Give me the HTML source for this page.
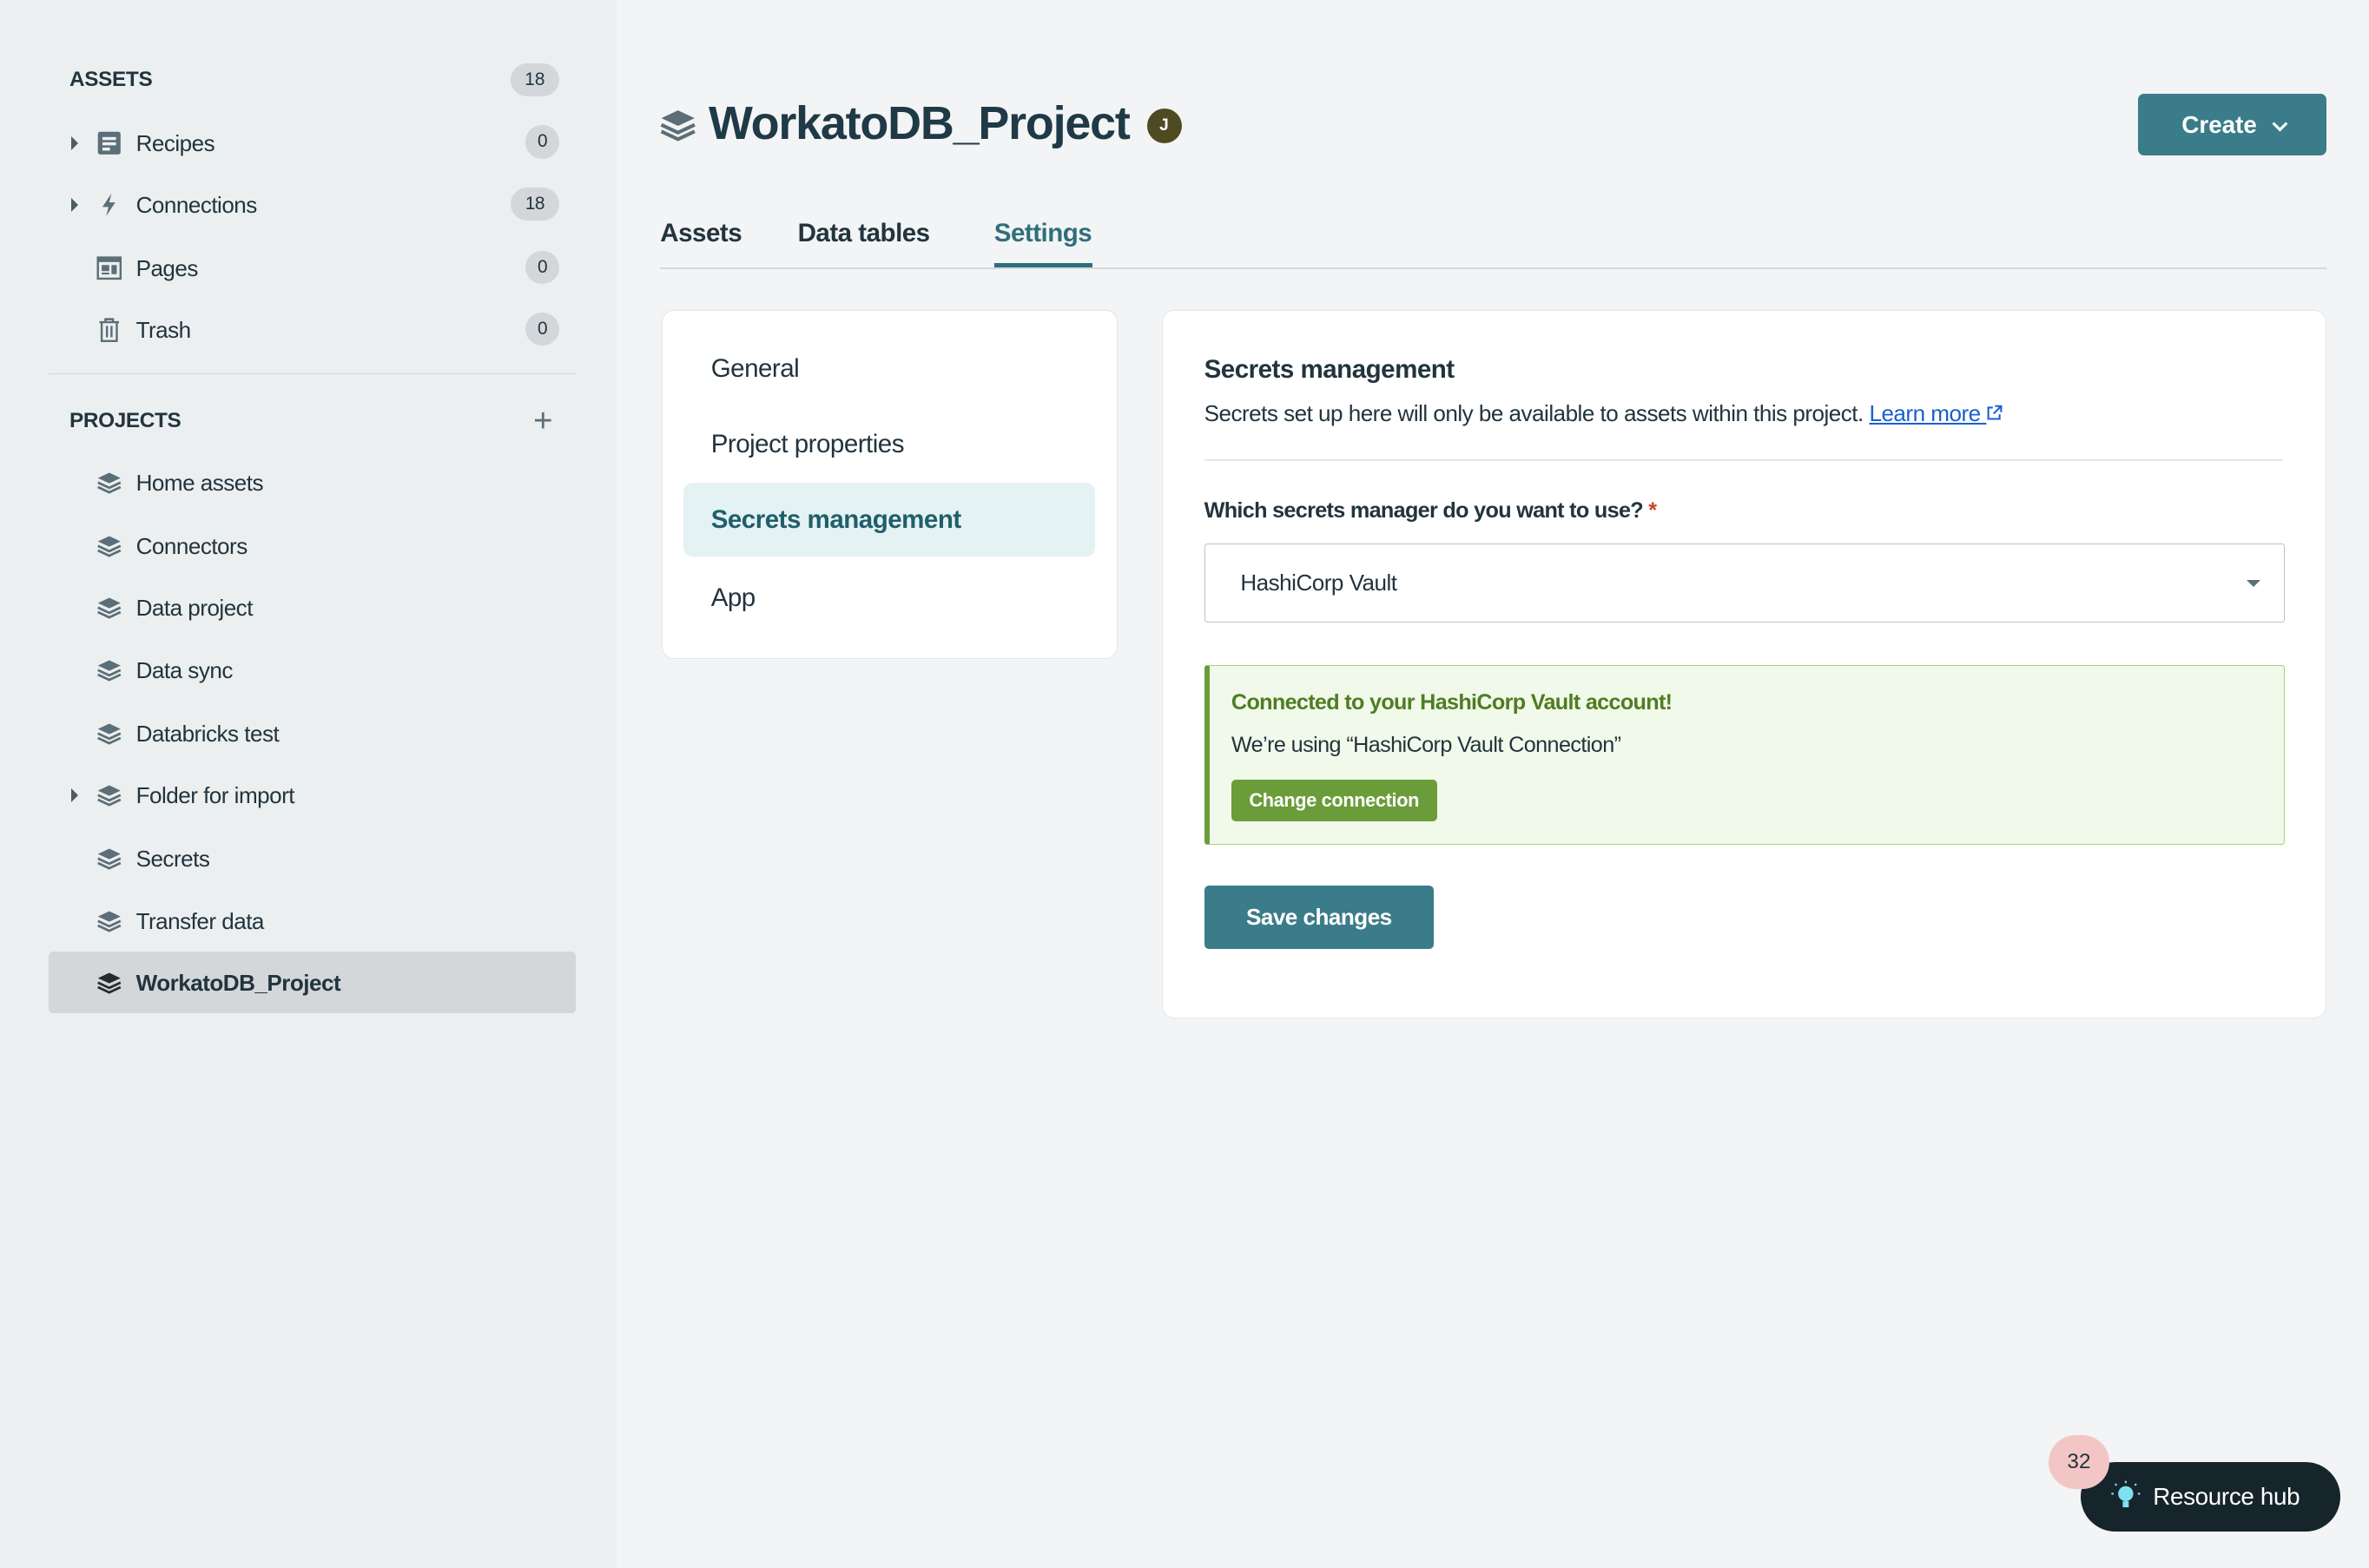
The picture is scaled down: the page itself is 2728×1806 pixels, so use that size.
<!DOCTYPE html>
<html><head><meta charset="utf-8"><style>
html,body{margin:0;padding:0}
body{width:1568px;height:1038px;zoom:1.73980;overflow:hidden;background:#f3f4f5;font-family:"Liberation Sans",sans-serif;color:#22343d;position:relative}
.a{position:absolute}
.side{left:0;top:0;width:408px;height:1038px;background:#eceff0}
.hd{font-size:14px;font-weight:bold;letter-spacing:-0.2px;color:#22343d}
.row{position:absolute;left:32px;width:349px;height:41px;font-size:15px;letter-spacing:-0.3px}
.row .t{position:absolute;left:58px;top:12px}
.row .ic{position:absolute;left:32px;top:12px;width:17px;height:17px}
.row .ar{position:absolute;left:15px;top:16px;width:0;height:0;border-left:5px solid #4c5c64;border-top:5px solid transparent;border-bottom:5px solid transparent}
.bd{position:absolute;right:11px;top:9px;height:22px;min-width:22px;padding:0 4px;box-sizing:border-box;border-radius:11px;background:#d3d7da;font-size:12px;text-align:center;line-height:22px}
.card{background:#fff;border:1px solid #e3e6e8;border-radius:8px;box-sizing:border-box}
.mi{position:absolute;left:14px;width:272px;height:49px;font-size:17px;line-height:49px;padding-left:18px;box-sizing:border-box;border-radius:6px;letter-spacing:-0.3px}
</style></head><body>
<div class="a side"></div>
<svg width="0" height="0" style="position:absolute"><defs>
<g id="stk"><path d="M8.5 2 L16 5.5 L8.5 9 L1 5.5Z" fill="#5c6e77"/><path d="M1 8.5 L8.5 12 L16 8.5" fill="none" stroke="#5c6e77" stroke-width="1.6"/><path d="M1 11.5 L8.5 15 L16 11.5" fill="none" stroke="#5c6e77" stroke-width="1.6"/></g>
</defs></svg>

<div class="a hd" style="left:46px;top:45px">ASSETS</div>
<div class="a" style="left:338px;top:42px;width:32px;height:22px;border-radius:11px;background:#d3d7da;font-size:12px;text-align:center;line-height:22px">18</div>

<div class="row" style="top:74px"><div class="ar"></div><svg class="ic" viewBox="0 0 17 17"><rect x="1" y="1" width="15" height="15" rx="1.5" fill="#5c6e77"/><rect x="4" y="4.5" width="9" height="2" fill="#eceff0"/><rect x="4" y="8" width="9" height="2" fill="#eceff0"/><rect x="4" y="11.5" width="5" height="2" fill="#eceff0"/></svg><span class="t">Recipes</span><span class="bd">0</span></div>
<div class="row" style="top:115px"><div class="ar"></div><svg class="ic" viewBox="0 0 17 17"><path d="M10 1 L4 10 L8 10 L6.5 16 L12.5 7 L8.5 7Z" fill="#5c6e77"/></svg><span class="t">Connections</span><span class="bd" style="width:32px">18</span></div>
<div class="row" style="top:157px"><svg class="ic" viewBox="0 0 17 17"><rect x="1" y="1.5" width="15" height="14" fill="none" stroke="#5c6e77" stroke-width="1.4"/><rect x="1" y="1.5" width="15" height="3" fill="#5c6e77"/><rect x="3.5" y="6.5" width="5" height="4" fill="#5c6e77"/><rect x="10" y="6.5" width="3.5" height="6" fill="#5c6e77"/><rect x="3.5" y="11.5" width="5" height="1.2" fill="#5c6e77"/></svg><span class="t">Pages</span><span class="bd">0</span></div>
<div class="row" style="top:198px"><svg class="ic" viewBox="0 0 17 17"><path d="M2 3.5 H15 M6 3.5 V1.5 H11 V3.5 M3.5 3.5 V16 H13.5 V3.5 M7 6 V13.5 M10 6 V13.5" fill="none" stroke="#5c6e77" stroke-width="1.4"/></svg><span class="t">Trash</span><span class="bd">0</span></div>

<div class="a" style="left:32px;top:247px;width:349px;height:1px;background:#d3d7da"></div>
<div class="a hd" style="left:46px;top:271px">PROJECTS</div>
<div class="a" style="left:353px;top:266px;font-size:22px;color:#5c6e77;font-weight:300">+</div>

<div class="row" style="top:299px"><svg class="ic" viewBox="0 0 17 17"><use href="#stk"/></svg><span class="t">Home assets</span></div>
<div class="row" style="top:341px"><svg class="ic" viewBox="0 0 17 17"><use href="#stk"/></svg><span class="t">Connectors</span></div>
<div class="row" style="top:382px"><svg class="ic" viewBox="0 0 17 17"><use href="#stk"/></svg><span class="t">Data project</span></div>
<div class="row" style="top:423px"><svg class="ic" viewBox="0 0 17 17"><use href="#stk"/></svg><span class="t">Data sync</span></div>
<div class="row" style="top:465px"><svg class="ic" viewBox="0 0 17 17"><use href="#stk"/></svg><span class="t">Databricks test</span></div>
<div class="row" style="top:506px"><div class="ar"></div><svg class="ic" viewBox="0 0 17 17"><use href="#stk"/></svg><span class="t">Folder for import</span></div>
<div class="row" style="top:548px"><svg class="ic" viewBox="0 0 17 17"><use href="#stk"/></svg><span class="t">Secrets</span></div>
<div class="row" style="top:589px"><svg class="ic" viewBox="0 0 17 17"><use href="#stk"/></svg><span class="t">Transfer data</span></div>
<div class="row" style="top:630px;background:#d3d7da;border-radius:3px;font-weight:bold"><svg class="ic" viewBox="0 0 17 17" style="filter:brightness(0.4)"><use href="#stk"/></svg><span class="t">WorkatoDB_Project</span></div>

<svg class="a" style="left:436px;top:70px" width="25" height="25" viewBox="0 0 17 17"><use href="#stk"/></svg>
<div class="a" style="left:469px;top:64px;font-size:31px;font-weight:bold;color:#1f3a46;letter-spacing:-0.7px">WorkatoDB_Project</div>
<div class="a" style="left:759px;top:72px;width:23px;height:23px;border-radius:50%;background:#4f4a22;color:#fff;font-size:11px;font-weight:bold;text-align:center;line-height:23px">J</div>

<div class="a" style="left:1415px;top:62px;width:125px;height:41px;border-radius:4px;background:#3a7c89;color:#fff;font-size:16px;font-weight:bold;line-height:41px;box-sizing:border-box;padding-left:29px">Create <svg width="12" height="8" viewBox="0 0 12 8" style="margin-left:5px"><path d="M1.5 1.5 L6 6 L10.5 1.5" fill="none" stroke="#fff" stroke-width="1.8"/></svg></div>

<div class="a" style="left:437px;top:145px;font-size:17px;font-weight:bold;letter-spacing:-0.3px">Assets</div>
<div class="a" style="left:528px;top:145px;font-size:17px;font-weight:bold;letter-spacing:-0.3px">Data tables</div>
<div class="a" style="left:658px;top:145px;font-size:17px;font-weight:bold;color:#2f6f7c;letter-spacing:-0.3px">Settings</div>
<div class="a" style="left:437px;top:177px;width:1103px;height:1px;background:#d5d9dc"></div>
<div class="a" style="left:658px;top:174px;width:65px;height:3px;background:#2f6f7c"></div>

<div class="a card" style="left:438px;top:205px;width:302px;height:231px">
<div class="mi" style="top:14px">General</div>
<div class="mi" style="top:64px">Project properties</div>
<div class="mi" style="top:114px;background:#e4f2f3;color:#1f5f6b;font-weight:bold">Secrets management</div>
<div class="mi" style="top:166px">App</div>
</div>

<div class="a card" style="left:769px;top:205px;width:771px;height:469px"></div>
<div class="a" style="left:797px;top:235px;font-size:17px;font-weight:bold;letter-spacing:-0.3px">Secrets management</div>
<div class="a" style="left:797px;top:265px;font-size:15px;letter-spacing:-0.3px">Secrets set up here will only be available to assets within this project. <span style="color:#1a5fd0;text-decoration:underline">Learn more </span><svg width="11" height="11" viewBox="0 0 11 11"><path d="M4.5 2 H1.5 V9.5 H9 V6.5 M6 1 H10 V5 M10 1 L5 6" fill="none" stroke="#1a5fd0" stroke-width="1.2"/></svg></div>
<div class="a" style="left:797px;top:304px;width:714px;height:1px;background:#e3e6e8"></div>
<div class="a" style="left:797px;top:330px;font-size:14.5px;font-weight:bold;letter-spacing:-0.4px">Which secrets manager do you want to use? <span style="color:#c8402c">*</span></div>
<div class="a" style="left:797px;top:360px;width:715px;height:52px;border:1px solid #bcc3c9;border-radius:2px;box-sizing:border-box;background:#fff"></div>
<div class="a" style="left:821px;top:377px;font-size:15px;letter-spacing:-0.3px">HashiCorp Vault</div>
<div class="a" style="left:1487px;top:384px;border-top:5px solid #5c6e77;border-left:5px solid transparent;border-right:5px solid transparent"></div>

<div class="a" style="left:797px;top:440px;width:715px;height:119px;background:#f1f9ea;border:1px solid #a6d27a;border-left:4px solid #6a9d3a;box-sizing:border-box;border-radius:2px"></div>
<div class="a" style="left:815px;top:457px;font-size:14.5px;font-weight:bold;color:#4e7d22;letter-spacing:-0.4px">Connected to your HashiCorp Vault account!</div>
<div class="a" style="left:815px;top:485px;font-size:14.5px;letter-spacing:-0.35px">We’re using “HashiCorp Vault Connection”</div>
<div class="a" style="left:815px;top:516px;width:136px;height:28px;background:#6a9d3a;border-radius:3px;color:#fff;font-size:12.5px;font-weight:bold;text-align:center;line-height:28px;letter-spacing:-0.2px">Change connection</div>

<div class="a" style="left:797px;top:586px;width:152px;height:42px;background:#3a7c89;border-radius:3px;color:#fff;font-size:15px;font-weight:bold;text-align:center;line-height:42px;letter-spacing:-0.3px">Save changes</div>

<div class="a" style="left:1377px;top:968px;width:172px;height:46px;border-radius:23px;background:#15252b;color:#fff;font-size:16px;line-height:46px;box-sizing:border-box;padding-left:48px;letter-spacing:-0.2px">Resource hub</div>
<svg class="a" style="left:1395px;top:979px" width="24" height="24" viewBox="0 0 24 24"><circle cx="12" cy="10" r="5" fill="#7fe0ef"/><rect x="10" y="15" width="4" height="4" fill="#7fe0ef"/><path d="M12 1.5V3 M4 10H2.5 M21.5 10H20 M6 4.5L5 3.5 M18 4.5L19 3.5" stroke="#7fe0ef" stroke-width="1.2"/></svg>
<div class="a" style="left:1356px;top:950px;width:40px;height:36px;border-radius:18px;background:#f3c6c6;font-size:14px;text-align:center;line-height:36px;color:#22343d">32</div>
</body></html>
